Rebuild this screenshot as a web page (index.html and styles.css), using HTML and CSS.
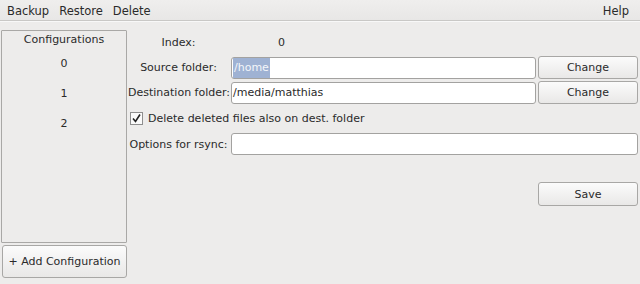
FILE: index.html
```html
<!DOCTYPE html>
<html>
    <head>
        <title>Backup Configurations</title>
        <meta charset="UTF-8" />
        <link rel="stylesheet" href="styles.css">
    </head>
    <body>
        <div class="menubar">
            <span class="menu-item">Backup</span>
            <span class="menu-item">Restore</span>
            <span class="menu-item">Delete</span>
            <span class="menu-item help">Help</span>
        </div>
        <div class="main">
            <div class="sidebar">
                <div class="config-list">
                    <div class="config-header">Configurations</div>
                    <div class="config-item">0</div>
                    <div class="config-item">1</div>
                    <div class="config-item">2</div>
                </div>
                <button class="add-button">+ Add Configuration</button>
            </div>
            <div class="form">
                <label class="form-label">Index:</label>
                <div class="index-value">0</div>

                <label class="form-label" for="source">Source folder:</label>
                <div class="text-input" id="source"><span class="selected">/home</span></div>
                <button class="btn">Change</button>

                <label class="form-label" for="dest">Destination folder:</label>
                <div class="text-input" id="dest">/media/matthias</div>
                <button class="btn">Change</button>

                <div class="check-row">
                    <svg class="checkbox" width="13" height="13" viewBox="0 0 13 13">
                        <rect x="0.5" y="0.5" width="12" height="12" fill="#fafafa" stroke="#8e8e8e"/>
                        <path d="M3 6.5 L5.5 9.5 L10 2.5" fill="none" stroke="#222" stroke-width="1.6"/>
                    </svg>
                    <span>Delete deleted files also on dest. folder</span>
                </div>

                <label class="form-label" for="rsync">Options for rsync:</label>
                <div class="text-input wide" id="rsync"></div>

                <button class="btn save">Save</button>
            </div>
        </div>
    </body>
</html>
```

FILE: styles.css
```css
body {
    margin: 0;
    background-color: #edeceb;
    font-family: "DejaVu Sans", sans-serif;
    font-size: 11px;
    color: #2a2a2a;
    height: 284px;
    overflow: hidden;
}
.menubar {
    display: flex;
    align-items: center;
    height: 21px;
    padding: 1px 6px 0 2px;
    box-sizing: border-box;
    font-size: 11.5px;
    background: linear-gradient(#efeeed, #e8e7e6);
    border-bottom: 1px solid #c9c8c6;
    box-shadow: 0 1px 0 #f8f8f8;
}
.menu-item {
    padding: 0 5px;
}
.menu-item.help {
    margin-left: auto;
}
.main {
    display: flex;
    gap: 1px;
    padding: 9px 2px 0 1px;
}
.sidebar {
    display: flex;
    flex-direction: column;
    gap: 2px;
    width: 126px;
}
.config-list {
    height: 211px;
    border: 1px solid #a9a8a6;
    border-radius: 1px;
    text-align: center;
}
.config-header {
    height: 18px;
    line-height: 18px;
}
.config-item {
    height: 30px;
    line-height: 30px;
}
.add-button {
    height: 33px;
    margin-left: 1px;
    width: 125px;
}
button {
    font-family: "DejaVu Sans", sans-serif;
    font-size: 11px;
    color: #2a2a2a;
    background: linear-gradient(#fbfbfb, #e9e8e7);
    border: 1px solid #a8a7a5;
    border-radius: 3px;
    padding: 0;
}
.form {
    flex: 1;
    display: grid;
    grid-template-columns: 101px 305px 100px;
    grid-template-rows: 23px 23px 23px 25px 22px 23px 24px;
    column-gap: 2px;
    row-gap: 2px;
    margin-top: 1px;
    align-items: center;
}
.form-label {
    text-align: center;
    white-space: nowrap;
}
.index-value {
    grid-column: 2 / 4;
    padding-left: 47px;
}
.text-input {
    height: 20px;
    line-height: 20px;
    background-color: #ffffff;
    border: 1px solid #a3a2a0;
    border-radius: 3px;
    padding: 0 1px;
    white-space: nowrap;
}
.text-input.wide {
    grid-column: 2 / 4;
}
.selected {
    display: inline-block;
    background-color: #9fb2d3;
    color: #f4f6fa;
    padding: 0 1px;
    line-height: 20px;
}
.btn {
    height: 23px;
}
.check-row {
    grid-column: 1 / 4;
    display: flex;
    align-items: center;
    gap: 5px;
    padding-left: 2px;
}
.checkbox {
    flex: none;
}
.save {
    grid-column: 3;
    grid-row: 7;
    height: 24px;
}
```
